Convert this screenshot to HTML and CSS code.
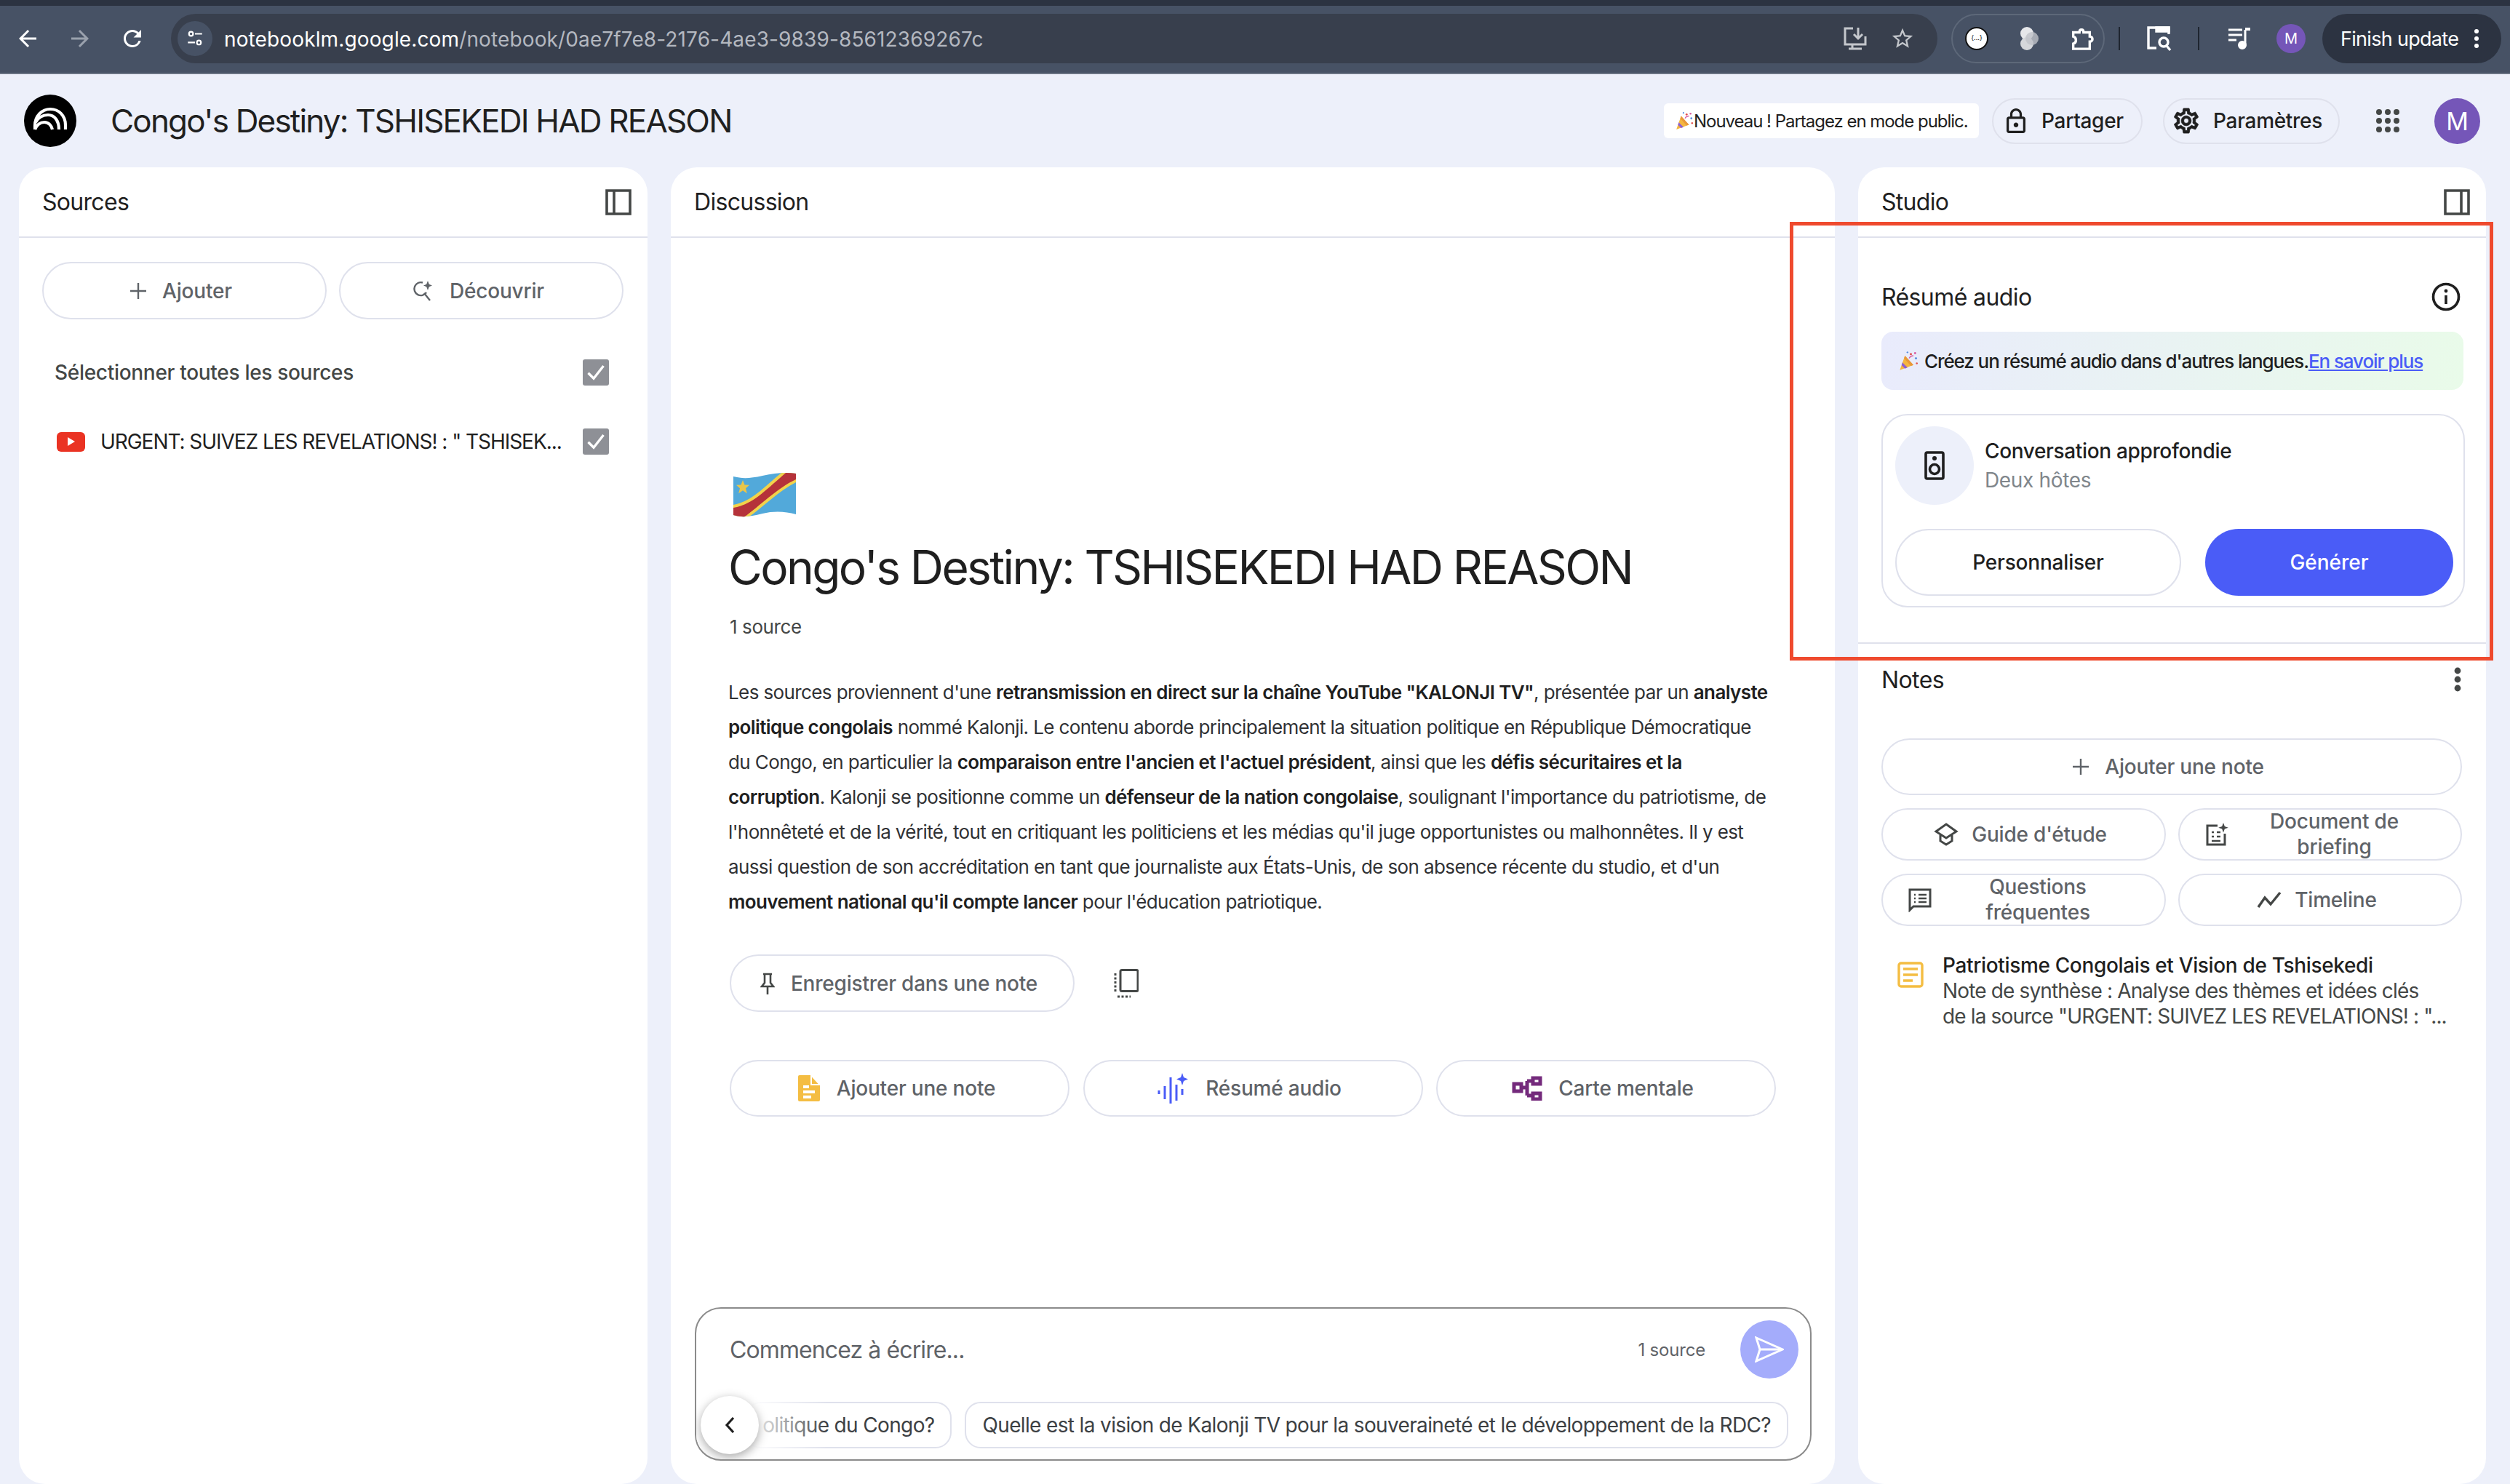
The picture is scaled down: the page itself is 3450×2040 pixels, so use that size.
FILE: index.html
```html
<!doctype html>
<html lang="fr">
<head>
	<meta charset="UTF-8">
	<title>Congo's Destiny: TSHISEKEDI HAD REASON - NotebookLM</title>
	<link rel="stylesheet" href="styles.css">
</head>
<body>
	<div class="tabstrip"></div>

	<!-- barre du navigateur -->
	<div class="toolbar">
		<svg class="nav" viewBox="4 4 16 16"><path d="M20 11H7.83l5.59-5.59L12 4l-8 8 8 8 1.41-1.41L7.83 13H20v-2z" fill="#fff"/></svg>
		<svg class="nav" viewBox="4 4 16 16"><path d="M12 4l-1.41 1.41L16.17 11H4v2h12.17l-5.58 5.59L12 20l8-8z" fill="#9aa1ad"/></svg>
		<svg class="nav" viewBox="4 4 16 16"><path d="M17.65 6.35A7.958 7.958 0 0 0 12 4c-4.42 0-7.99 3.58-7.99 8s3.57 8 7.99 8c3.73 0 6.84-2.55 7.73-6h-2.08A5.99 5.99 0 0 1 12 18c-3.31 0-6-2.69-6-6s2.69-6 6-6c1.66 0 3.14.69 4.22 1.78L13 11h7V4l-2.35 2.35z" fill="#fff"/></svg>
		<div class="omnibox">
			<span class="tune">
				<svg viewBox="0 0 24 24" width="26" height="26" fill="none" stroke="#fff" stroke-width="2"><circle cx="7" cy="6" r="2.6"/><path d="M12 6h9M3 17h9"/><circle cx="17" cy="17" r="2.6"/></svg>
			</span>
			<span class="url">notebooklm.google.com<span class="url-path">/notebook/0ae7f7e8-2176-4ae3-9839-85612369267c</span></span>
			<svg class="omni-icon" viewBox="0 0 34 34" fill="none" stroke="#c4c7cc" stroke-width="3"><path d="M14 3H3v22h28V14"/><path d="M13 25v5M8 31h18" /><path d="M21 2v14M15 11l6 6 6-6"/></svg>
			<svg class="omni-icon star" viewBox="0 0 24 24"><path d="M22 9.24l-7.19-.62L12 2 9.19 8.63 2 9.24l5.46 4.73L5.82 21 12 17.27 18.18 21l-1.63-7.03L22 9.24zM12 15.4l-3.76 2.27 1-4.28-3.32-2.88 4.38-.38L12 6.1l1.71 4.04 4.38.38-3.32 2.88 1 4.28L12 15.4z" fill="#c4c7cc"/></svg>
		</div>
		<div class="ext-group">
			<span class="ext-dot">{...}</span>
			<svg class="ext-blob" viewBox="0 0 28 32"><circle cx="11" cy="9" r="9" fill="#e6e7ea"/><circle cx="11" cy="23" r="9" fill="#d5d7db"/><circle cx="18" cy="16" r="9" fill="#bfc2c8" opacity=".8"/></svg>
			<svg class="ext-puzzle" viewBox="0 0 24 24" fill="none" stroke="#fff" stroke-width="2.4"><path d="M4 6H10C10 2.500 14 2.500 14 6H20V10C23.500 10 23.500 15 20 15V22H4V17C7.500 16 7.500 11 4 10Z"/></svg>
		</div>
		<span class="sep sep-a"></span>
		<svg class="tool-icon" viewBox="0 0 36 36" fill="none" stroke="#fff" stroke-width="3.4"><path d="M14 31H3V3h28v9"/><path d="M14 3h17v5H14z" fill="#fff"/><circle cx="24" cy="23" r="6"/><path d="M28 28l5 6"/></svg>
		<span class="sep sep-b"></span>
		<svg class="tool-icon queue" viewBox="0 0 32 32" fill="none" stroke="#fff" stroke-width="3"><path d="M1 4h19M1 11h19M1 18h11"/><path d="M24 4v20"/><path d="M24 3h7" stroke-width="4"/><circle cx="20" cy="25" r="4.500" fill="#fff"/></svg>
		<span class="avatar-small">M</span>
		<div class="update">
			<span>Finish update</span>
			<svg class="kebab" viewBox="0 0 6 28" fill="#fff"><circle cx="3" cy="4" r="3"/><circle cx="3" cy="14" r="3"/><circle cx="3" cy="24" r="3"/></svg>
		</div>
	</div>

	<!-- en-tete de l'application -->
	<header class="head">
		<svg class="logo" viewBox="0 0 72 72"><circle cx="36" cy="36" r="36" fill="#000"/><g fill="none" stroke="#fff" stroke-width="4.200"><path d="M15 48V43C15 29 25 20 36 20C48 20 57 29 57 42V48"/><path d="M16 38C20 31 27 28 33 28C42 28 48 36 48 48"/><path d="M15 48C18 41 23 38 28 38C34 38 38 43 39 48"/></g></svg>
		<h1 class="app-title">Congo's Destiny: TSHISEKEDI HAD REASON</h1>
		<div class="toast"><svg class="party" viewBox="0 0 24 24"><use href="#popper"/></svg>Nouveau ! Partagez en mode public.</div>
		<button class="head-btn share">
			<svg viewBox="4 1 16 21" width="26" height="36"><path d="M18 8h-1V6c0-2.760-2.240-5-5-5S7 3.240 7 6v2H6c-1.100 0-2 .9-2 2v10c0 1.100.9 2 2 2h12c1.100 0 2-.9 2-2V10c0-1.100-.9-2-2-2zM9 6c0-1.660 1.340-3 3-3s3 1.340 3 3v2H9V6zm9 14H6V10h12v10zm-6-3c1.100 0 2-.9 2-2s-.9-2-2-2-2 .9-2 2 .9 2 2 2z" fill="#1f1f1f"/></svg>
			Partager
		</button>
		<button class="head-btn params">
			<svg viewBox="2 2 20 20" width="34" height="36"><path d="M19.430 12.980c.04-.32.07-.64.07-.98 0-.34-.03-.66-.07-.98l2.110-1.650c.19-.15.24-.42.12-.64l-2-3.460a.5.5 0 0 0-.61-.22l-2.490 1c-.52-.4-1.080-.73-1.690-.98l-.38-2.650A.488.488 0 0 0 14 2h-4c-.25 0-.46.18-.49.42l-.38 2.650c-.61.25-1.170.59-1.690.98l-2.490-1a.566.566 0 0 0-.18-.03c-.17 0-.34.09-.43.25l-2 3.460c-.13.22-.07.49.12.64l2.110 1.650c-.04.32-.07.65-.07.98 0 .33.03.66.07.98l-2.110 1.650c-.19.15-.24.42-.12.64l2 3.460a.5.5 0 0 0 .61.22l2.490-1c.52.4 1.080.73 1.690.98l.38 2.650c.03.24.24.42.49.42h4c.25 0 .46-.18.49-.42l.38-2.650c.61-.25 1.170-.59 1.690-.98l2.490 1c.06.02.12.03.18.03.17 0 .34-.09.43-.25l2-3.460c.12-.22.07-.49-.12-.64l-2.110-1.650zm-1.980-1.710c.04.31.05.52.05.73 0 .21-.02.43-.05.73l-.14 1.130.89.7 1.080.84-.7 1.210-1.270-.51-1.040-.42-.9.68c-.43.32-.84.56-1.250.73l-1.060.43-.16 1.130-.2 1.350h-1.400l-.19-1.350-.16-1.130-1.060-.43c-.43-.18-.83-.41-1.230-.71l-.91-.7-1.060.43-1.270.51-.7-1.210 1.080-.84.89-.7-.14-1.130c-.03-.31-.05-.54-.05-.74s.02-.43.05-.73l.14-1.130-.89-.7-1.080-.84.7-1.210 1.270.51 1.040.42.9-.68c.43-.32.84-.56 1.250-.73l1.060-.43.16-1.130.2-1.350h1.390l.19 1.350.16 1.130 1.060.43c.43.18.83.41 1.230.71l.91.7 1.060-.43 1.270-.51.7 1.210-1.070.85-.89.7.14 1.130zM12 8c-2.210 0-4 1.790-4 4s1.790 4 4 4 4-1.790 4-4-1.790-4-4-4zm0 6c-1.100 0-2-.9-2-2s.9-2 2-2 2 .9 2 2-.9 2-2 2z" fill="#1f1f1f" stroke="#1f1f1f" stroke-width=".5"/></svg>
			Paramètres
		</button>
		<div class="apps">
			<i></i><i></i><i></i><i></i><i></i><i></i><i></i><i></i><i></i>
		</div>
		<span class="avatar">M</span>
	</header>

	<svg class="sprite" width="0" height="0">
		<symbol id="popper" viewBox="0 0 24 24">
			<path d="M2 23L8 6l10 11z" fill="#f4b63f"/>
			<path d="M5 14l6 6-3 1.200-4-4z" fill="#8e5fd0"/>
			<path d="M8 6l10 11-3 1L7 9z" fill="#e8973a"/>
			<circle cx="15" cy="4" r="1.300" fill="#e2504c"/><circle cx="21" cy="9" r="1.300" fill="#5a8fe0"/><circle cx="11" cy="2" r="1" fill="#5a8fe0"/><circle cx="20" cy="3" r="1.200" fill="#d85aa0"/><circle cx="22" cy="15" r="1.100" fill="#e2504c"/>
			<path d="M13 9c1-2 3-3 5-3" stroke="#d85aa0" stroke-width="1.300" fill="none"/>
		</symbol>
		<symbol id="panel-left" viewBox="0 0 36 36">
			<path d="M2 2h32v32H2zM12 2v32" fill="none" stroke="#444746" stroke-width="3.600"/>
		</symbol>
		<symbol id="panel-right" viewBox="0 0 36 36">
			<path d="M2 2h32v32H2zM24 2v32" fill="none" stroke="#444746" stroke-width="3.600"/>
		</symbol>
	</svg>

	<main class="columns">
		<!-- Sources -->
		<section class="panel">
			<div class="panel-head">
				<span>Sources</span>
				<svg class="panel-toggle"><use href="#panel-left"/></svg>
			</div>
			<div class="sources-body">
				<div class="two-btns">
					<button class="pill"><svg class="plus" viewBox="0 0 22 22"><path d="M11 0v22M0 11h22" stroke="#5f6368" stroke-width="2.400"/></svg>Ajouter</button>
					<button class="pill"><svg class="disc" viewBox="0 0 30 30" fill="none" stroke="#5f6368" stroke-width="2.400"><path d="M15 3.500A9 9 0 1 0 20 17"/><path d="M17 18l8 10"/><path d="M22 1l1.800 4.700L28 7.500l-4.200 1.800L22 14l-1.800-4.700L16 7.500l4.200-1.800z" fill="#5f6368" stroke="none"/></svg>Découvrir</button>
				</div>
				<div class="select-row">
					<span class="select-all">Sélectionner toutes les sources</span>
					<span class="check"><svg viewBox="0 0 24 24"><path d="M5 12.500l5 5L19 6" fill="none" stroke="#fff" stroke-width="2.200"/></svg></span>
				</div>
				<div class="source-row">
					<span class="yt"><svg viewBox="0 0 10 12" width="10" height="12"><path d="M0 0l10 6-10 6z" fill="#fff"/></svg></span>
					<span class="source-name">URGENT: SUIVEZ LES REVELATIONS! : " TSHISEK...</span>
					<span class="check"><svg viewBox="0 0 24 24"><path d="M5 12.500l5 5L19 6" fill="none" stroke="#fff" stroke-width="2.200"/></svg></span>
				</div>
			</div>
		</section>

		<!-- Discussion -->
		<section class="panel">
			<div class="panel-head"><span>Discussion</span></div>
			<div class="chat">
				<svg class="flag" viewBox="0 0 86 62">
					<defs><clipPath id="flagclip"><path d="M0 5C12 8 22 8 40 4 58 0 72-1 86 1V57C72 53 56 52 40 56 24 60 12 62 0 58Z"/></clipPath></defs>
					<g clip-path="url(#flagclip)">
						<rect width="86" height="62" fill="#52a9da"/>
						<path d="M0 44C24 40 42 20 66 0L86 0V13C60 26 36 52 16 64L0 64Z" fill="#f2d24a"/>
						<path d="M0 48C26 44 44 24 72 0L86 0V9C58 22 32 50 10 64L0 64Z" fill="#b5323a"/>
					</g>
					<path d="M13 10l2.500 6.500 6.500.3-5 4.500 1.800 7-5.800-4-5.800 4 1.800-7-5-4.500 6.500-.3z" fill="#e9c649"/>
				</svg>
				<h2 class="chat-title">Congo's Destiny: TSHISEKEDI HAD REASON</h2>
				<div class="chat-count">1 source</div>
				<p class="summary">Les sources proviennent d'une <b>retransmission en direct sur la chaîne YouTube "KALONJI TV"</b>, présentée par un <b>analyste</b><br>
				<b>politique congolais</b> nommé Kalonji. Le contenu aborde principalement la situation politique en République Démocratique<br>
				du Congo, en particulier la <b>comparaison entre l'ancien et l'actuel président</b>, ainsi que les <b>défis sécuritaires et la</b><br>
				<b>corruption</b>. Kalonji se positionne comme un <b>défenseur de la nation congolaise</b>, soulignant l'importance du patriotisme, de<br>
				l'honnêteté et de la vérité, tout en critiquant les politiciens et les médias qu'il juge opportunistes ou malhonnêtes. Il y est<br>
				aussi question de son accréditation en tant que journaliste aux États-Unis, de son absence récente du studio, et d'un<br>
				<b>mouvement national qu'il compte lancer</b> pour l'éducation patriotique.</p>
				<div class="save-row">
					<button class="pill save"><svg class="pin" viewBox="0 0 20 30"><path d="M4 2h12M6 2v12l-4 5h16l-4-5V2M10 19v11" fill="none" stroke="#444746" stroke-width="2.600"/></svg>Enregistrer dans une note</button>
					<svg class="copy" viewBox="0 0 34 40" fill="none" stroke="#444746"><rect x="9" y="1.500" width="24" height="29" rx="2" stroke-width="3"/><path d="M2 6v26M5 38h18" stroke-width="3" stroke-dasharray="3 2.500"/></svg>
				</div>
				<div class="three-btns">
					<button class="pill"><svg class="ic-note" viewBox="0 0 32 38"><path d="M3 1h16l12 13v21a2 2 0 0 1-2 2H3a2 2 0 0 1-2-2V3a2 2 0 0 1 2-2z" fill="#f4bd42"/><path d="M8 15h8v4H8zM8 22h16v4H8zM8 29h11v4H8zM19 1v12h12" fill="#fff"/><path d="M19 1l12 13H19z" fill="#f4bd42" stroke="#fff" stroke-width="2"/></svg>Ajouter une note</button>
					<button class="pill"><svg class="ic-audio" viewBox="0 0 44 42" fill="none" stroke="#4a5cf7" stroke-width="3"><path d="M2 24v5M10 18v18M18 6v36M26 16v22M34 22v8"/><path d="M34 0l2 6 6 2.500-6 2.500-2 6-2-6-6-2.500 6-2.500z" fill="#4a5cf7" stroke="none"/></svg>Résumé audio</button>
					<button class="pill"><svg class="ic-map" viewBox="0 0 42 34" fill="none" stroke="#742a7c" stroke-width="5"><rect x="3" y="11" width="10" height="10"/><rect x="29" y="3" width="10" height="8"/><rect x="29" y="24" width="10" height="8"/><path d="M13 16h8M21 7v20M21 7h8M21 27h8"/></svg>Carte mentale</button>
				</div>

				<div class="composer">
					<div class="composer-top">
						<span class="placeholder">Commencez à écrire...</span>
						<span class="composer-count">1 source</span>
						<span class="send"><svg viewBox="0 0 40 36" width="40" height="36" fill="none" stroke="#fff" stroke-width="3"><path d="M2 2l36 16L2 34l5-16z"/><path d="M7 18h31"/></svg></span>
					</div>
					<div class="chips">
						<span class="chip">olitique du Congo?</span>
						<span class="chip">Quelle est la vision de Kalonji TV pour la souveraineté et le développement de la RDC?</span>
					</div>
					<span class="chip-back"><svg viewBox="0 0 14 24" width="14" height="24"><path d="M12 2L3 12l9 10" fill="none" stroke="#1f1f1f" stroke-width="3.200"/></svg></span>
				</div>
			</div>
		</section>

		<!-- Studio -->
		<section class="panel">
			<div class="panel-head">
				<span>Studio</span>
				<svg class="panel-toggle"><use href="#panel-right"/></svg>
			</div>
			<div class="audio-section">
				<div class="section-title">
					<span>Résumé audio</span>
					<svg class="info" viewBox="0 0 40 40" fill="none" stroke="#1f1f1f"><circle cx="20" cy="20" r="17.500" stroke-width="3.600"/><path d="M20 18v12" stroke-width="3.600"/><circle cx="20" cy="12" r="2.400" fill="#1f1f1f" stroke="none"/></svg>
				</div>
				<div class="banner">
					<svg class="banner-party" viewBox="0 0 24 24"><use href="#popper"/></svg>
					<span>Créez un résumé audio dans d'autres langues.<a class="more" href="#">En savoir plus</a></span>
				</div>
				<div class="audio-card">
					<div class="audio-top">
						<span class="speaker-wrap">
							<svg viewBox="0 0 28 40" width="28" height="40" fill="none" stroke="#1f1f1f" stroke-width="3.600"><rect x="2" y="2" width="24" height="36" rx="2"/><circle cx="14" cy="25" r="6.500"/><circle cx="14" cy="10" r="3" fill="#1f1f1f" stroke="none"/></svg>
						</span>
						<div>
							<div class="audio-name">Conversation approfondie</div>
							<div class="audio-sub">Deux hôtes</div>
						</div>
					</div>
					<div class="audio-btns">
						<button class="btn-outline">Personnaliser</button>
						<button class="btn-blue">Générer</button>
					</div>
				</div>
			</div>
			<div class="notes">
				<div class="section-title">
					<span>Notes</span>
					<svg class="notes-menu" viewBox="0 0 10 34" fill="#444746"><circle cx="5" cy="5" r="4.400"/><circle cx="5" cy="17" r="4.400"/><circle cx="5" cy="29" r="4.400"/></svg>
				</div>
				<button class="pill add-note"><svg class="plus" viewBox="0 0 22 22"><path d="M11 0v22M0 11h22" stroke="#5f6368" stroke-width="2.400"/></svg>Ajouter une note</button>
				<div class="note-grid">
					<button class="pill small"><svg class="ic-small" viewBox="0 0 34 34" fill="none" stroke="#444746" stroke-width="3"><path d="M17 3l14 10-14 9L3 13zM9 18v8l8 5 8-5v-8"/></svg>Guide d'étude</button>
					<button class="pill small two-line"><svg class="ic-small" viewBox="0 0 34 34" fill="none" stroke="#444746" stroke-width="3"><path d="M18 5H4v26h24V16"/><path d="M10 14h3M17 14h5M10 20h3M17 20h5M10 26h12" stroke-width="2.600"/><path d="M26 1l1.800 5 5 1.800-5 1.800-1.800 5-1.800-5-5-1.800 5-1.800z" fill="#444746" stroke="none"/></svg><span class="two-text">Document de<br>briefing</span></button>
					<button class="pill small two-line"><svg class="ic-small" viewBox="0 0 34 34" fill="none" stroke="#444746" stroke-width="3"><path d="M3 3h28v23H8l-5 5z"/><path d="M9 10h2M15 10h11M9 15h2M15 15h11M9 20h2M15 20h11" stroke-width="2.600"/></svg><span class="two-text">Questions<br>fréquentes</span></button>
					<button class="pill small"><svg class="ic-small" viewBox="0 0 34 26" fill="none" stroke="#444746" stroke-width="3.400"><path d="M2 23l9-13 8 9L32 3"/></svg>Timeline</button>
				</div>
				<div class="note-item">
					<svg class="note-icon" viewBox="0 0 36 36" fill="none" stroke="#f4bd42" stroke-width="3.400"><rect x="2" y="2" width="32" height="32" rx="3"/><path d="M8 10h20M8 18h20M8 26h13" stroke-width="3.600"/></svg>
					<div>
						<div class="note-title">Patriotisme Congolais et Vision de Tshisekedi</div>
						<div class="note-text">Note de synthèse : Analyse des thèmes et idées clés<br>de la source "URGENT: SUIVEZ LES REVELATIONS! : "...</div>
					</div>
				</div>
			</div>
		</section>
	</main>

	<!-- cadre rouge pose sur la capture -->
	<div class="callout"></div>
</body>
</html>
```

FILE: styles.css
```css
*{
	box-sizing: border-box;
	padding: 0;
	margin: 0;
}
html, body{
	width: 3450px;
	height: 2040px;
	overflow: hidden;
}
body{
	background: #edf0fa;
	font-family: "Inter", "Noto Sans", sans-serif;
	color: #1f1f1f;
	position: relative;
}
button{
	font-family: inherit;
	background: #fff;
	cursor: pointer;
}
.sprite{
	position: absolute;
}

/* navigateur */
.tabstrip{
	height: 8px;
	background: #2c3341;
}
.toolbar{
	height: 94px;
	background: #475265;
	border-bottom: 2px solid #6a7383;
	display: flex;
	align-items: center;
	padding: 0 0 2px 26px;
	color: #fff;
}
.nav{
	width: 24px;
	height: 24px;
	margin-right: 48px;
	flex: none;
}
.omnibox{
	margin-left: -7px;
	width: 2428px;
	height: 68px;
	border-radius: 34px;
	background: #383f4d;
	display: flex;
	align-items: center;
	padding-left: 9px;
}
.tune{
	width: 48px;
	height: 48px;
	border-radius: 50%;
	background: #475265;
	display: flex;
	align-items: center;
	justify-content: center;
}
.url{
	font-size: 28px;
	letter-spacing: .13px;
	margin-left: 16px;
	padding-top: 2px;
	color: #fff;
	flex: 1;
	white-space: nowrap;
}
.url-path{
	color: #b4b8c0;
}
.omni-icon{
	width: 34px;
	height: 34px;
	margin-right: 31px;
}
.ext-group{
	margin-left: 19px;
	width: 211px;
	height: 68px;
	border: 2px solid #5d6879;
	border-radius: 34px;
	display: flex;
	align-items: center;
	padding-left: 17px;
}
.ext-dot{
	width: 32px;
	height: 32px;
	border-radius: 50%;
	background: #fff;
	border: 2px solid #111;
	color: #111;
	font-size: 9px;
	line-height: 26px;
	text-align: center;
}
.ext-blob{
	width: 28px;
	height: 32px;
	margin-left: 42px;
}
.ext-puzzle{
	width: 34px;
	height: 38px;
	margin-left: 41px;
}
.sep{
	width: 2px;
	height: 32px;
	background: #1f2530;
	flex: none;
}
.sep-a{
	margin-left: 19px;
}
.tool-icon{
	width: 36px;
	height: 36px;
	margin-left: 36px;
}
.sep-b{
	margin-left: 35px;
}
.tool-icon.queue{
	width: 32px;
	height: 32px;
	margin-left: 39px;
}
.avatar-small{
	width: 40px;
	height: 40px;
	margin-left: 35px;
	border-radius: 50%;
	background: #7556b8;
	font-size: 20px;
	line-height: 40px;
	text-align: center;
}
.update{
	margin-left: 23px;
	width: 246px;
	height: 68px;
	border-radius: 34px;
	background: #2c3341;
	display: flex;
	align-items: center;
	padding-left: 25px;
	font-size: 27px;
	letter-spacing: -.7px;
}
.kebab{
	width: 6px;
	height: 28px;
	margin-left: 22px;
}

/* en-tete */
.head{
	height: 128px;
	display: flex;
	align-items: center;
	padding: 0 41px 0 33px;
}
.logo{
	width: 72px;
	height: 72px;
	flex: none;
}
.app-title{
	margin-left: 47px;
	font-size: 44px;
	font-weight: 400;
	letter-spacing: -1.8px;
	white-space: nowrap;
	flex: 1;
}
.toast{
	width: 433px;
	height: 48px;
	flex: none;
	background: #fff;
	border-radius: 6px;
	display: flex;
	align-items: center;
	padding-left: 15px;
	font-size: 24px;
	letter-spacing: -1.03px;
	white-space: nowrap;
}
.party{
	width: 26px;
	height: 26px;
	flex: none;
}
.head-btn{
	height: 63px;
	flex: none;
	border-radius: 32px;
	border: 2px solid #dfe1ec;
	background: transparent;
	font-size: 28px;
	font-weight: 500;
	letter-spacing: -.3px;
	color: #1f1f1f;
	display: flex;
	align-items: center;
	gap: 22px;
	padding-left: 18px;
}
.share{
	width: 207px;
	margin-left: 18px;
}
.params{
	width: 243px;
	margin-left: 28px;
	padding-left: 13px;
	gap: 20px;
}
.apps{
	width: 32px;
	height: 32px;
	flex: none;
	margin-left: 50px;
	display: grid;
	grid-template-columns: repeat(3, 8px);
	grid-template-rows: repeat(3, 8px);
	gap: 4px;
}
.apps i{
	background: #444746;
	border-radius: 50%;
}
.avatar{
	width: 63px;
	height: 63px;
	flex: none;
	margin-left: 48px;
	border-radius: 50%;
	background: #7556b8;
	color: #fff;
	font-size: 34px;
	line-height: 63px;
	text-align: center;
}

/* colonnes */
.columns{
	height: 1810px;
	display: grid;
	grid-template-columns: 864px 1600px 863px;
	column-gap: 32px;
	padding-left: 26px;
}
.panel{
	background: #fff;
	border-radius: 36px;
	position: relative;
	overflow: hidden;
	display: flex;
	flex-direction: column;
}
.panel-head{
	height: 97px;
	flex: none;
	border-bottom: 2px solid #dfe1ec;
	display: flex;
	align-items: center;
	justify-content: space-between;
	padding: 0 22px 0 32px;
	font-size: 32px;
	letter-spacing: -.7px;
}
.panel-toggle{
	width: 36px;
	height: 36px;
}

/* boutons arrondis */
.pill{
	border: 2px solid #dfe1ec;
	border-radius: 40px;
	color: #5f6368;
	font-size: 28px;
	font-weight: 500;
	letter-spacing: -.2px;
	display: flex;
	align-items: center;
	justify-content: center;
	gap: 22px;
	padding-right: 9px;
}
.plus{
	width: 22px;
	height: 22px;
}
.disc{
	width: 30px;
	height: 30px;
}

/* Sources */
.sources-body{
	padding: 33px 32px 0;
}
.two-btns{
	display: grid;
	grid-template-columns: 391px 391px;
	column-gap: 17px;
}
.two-btns .pill{
	height: 79px;
}
.select-row{
	margin-top: 53px;
	height: 40px;
	display: flex;
	align-items: center;
	justify-content: space-between;
	padding: 0 21px 0 17px;
}
.select-all{
	font-size: 28px;
	font-weight: 500;
	letter-spacing: -.3px;
	color: #444746;
}
.check{
	width: 36px;
	height: 36px;
	flex: none;
	background: #8e9096;
	border-radius: 3px;
	display: flex;
}
.source-row{
	margin-top: 55px;
	height: 40px;
	display: flex;
	align-items: center;
	padding: 0 21px 0 20px;
}
.yt{
	width: 39px;
	height: 27px;
	background: #ea3323;
	border-radius: 6px;
	display: flex;
	align-items: center;
	justify-content: center;
	flex: none;
}
.source-name{
	margin-left: 21px;
	font-size: 28px;
	letter-spacing: -1.05px;
	white-space: nowrap;
	flex: 1;
	min-width: 0;
}

/* Discussion */
.chat{
	flex: 1;
	padding: 0 32px 32px 33px;
	display: flex;
	flex-direction: column;
}
.flag{
	width: 86px;
	height: 62px;
	margin: 323px 0 0 53px;
	flex: none;
}
.chat-title{
	margin: 24px 0 0 46px;
	font-size: 64px;
	line-height: 88px;
	font-weight: 400;
	letter-spacing: -2.6px;
	white-space: nowrap;
}
.chat-count{
	margin: 18px 0 0 48px;
	font-size: 26px;
	letter-spacing: -.4px;
	line-height: 40px;
	color: #444746;
}
.summary{
	margin: 46px 0 0 46px;
	font-size: 26px;
	letter-spacing: -.61px;
	line-height: 48px;
	color: #303134;
	white-space: nowrap;
}
.summary b{
	font-weight: 600;
	color: #1f1f1f;
}
.save-row{
	margin: 48px 0 0 48px;
	display: flex;
	align-items: center;
}
.save{
	width: 474px;
	height: 79px;
}
.pin{
	width: 20px;
	height: 30px;
}
.copy{
	width: 34px;
	height: 40px;
	margin-left: 54px;
}
.three-btns{
	margin: 66px 0 0 48px;
	display: grid;
	grid-template-columns: 467px 467px 467px;
	column-gap: 18.500px;
}
.three-btns .pill{
	height: 78px;
}
.ic-note{
	width: 32px;
	height: 38px;
}
.ic-audio{
	width: 44px;
	height: 42px;
}
.ic-map{
	width: 42px;
	height: 34px;
}
.composer{
	margin-top: auto;
	height: 211px;
	border: 2px solid #8b8b8b;
	border-radius: 36px;
	position: relative;
	overflow: hidden;
}
.composer-top{
	height: 112px;
	display: flex;
	align-items: center;
	padding: 0 16px 0 46px;
}
.placeholder{
	flex: 1;
	font-size: 32px;
	letter-spacing: -.9px;
	color: #5f6368;
}
.composer-count{
	font-size: 24px;
	letter-spacing: -.2px;
	color: #5f6368;
	margin-right: 48px;
}
.send{
	width: 80px;
	height: 80px;
	border-radius: 50%;
	background: #a4acfb;
	display: flex;
	align-items: center;
	justify-content: center;
}
.chips{
	margin-top: 16px;
	display: flex;
	justify-content: flex-end;
	gap: 18px;
	padding-right: 30px;
	position: relative;
}
.chips::before{
	content: "";
	position: absolute;
	left: 0;
	top: 0;
	width: 180px;
	height: 100%;
	background: linear-gradient(to right, #fff 40%, rgba(255,255,255,0));
}
.chip{
	flex: none;
	height: 64px;
	border: 2px solid #dfe1ec;
	border-radius: 22px;
	font-size: 28px;
	letter-spacing: -.64px;
	line-height: 60px;
	padding: 0 22px;
	color: #3c4043;
	white-space: nowrap;
}
.chip-back{
	position: absolute;
	left: 6px;
	top: 120px;
	width: 80px;
	height: 80px;
	border-radius: 50%;
	background: #fff;
	box-shadow: 0 4px 14px rgba(0,0,0,.35);
	display: flex;
	align-items: center;
	justify-content: center;
}

/* Studio */
.audio-section{
	height: 558px;
	flex: none;
	border-bottom: 2px solid #dfe1ec;
	padding: 58px 29px 0 32px;
}
.section-title{
	height: 46px;
	display: flex;
	align-items: center;
	justify-content: space-between;
	font-size: 32px;
	letter-spacing: -.6px;
}
.info{
	width: 40px;
	height: 40px;
	margin-right: 6px;
}
.banner{
	margin-top: 25px;
	width: 800px;
	height: 80px;
	border-radius: 16px;
	background: linear-gradient(100deg, #e9ebfc, #e9fbe9);
	display: flex;
	align-items: center;
	padding-left: 23px;
	font-size: 26px;
	font-weight: 500;
	letter-spacing: -1.1px;
	white-space: nowrap;
}
.banner-party{
	width: 28px;
	height: 28px;
	margin-right: 8px;
	flex: none;
}
.more{
	color: #4a5cf7;
}
.audio-card{
	margin-top: 33px;
	width: 802px;
	height: 266px;
	border: 2px solid #dfe1ec;
	border-radius: 36px;
	padding: 15px 17px 0;
}
.audio-top{
	display: flex;
	align-items: center;
	gap: 15px;
}
.speaker-wrap{
	width: 108px;
	height: 108px;
	border-radius: 50%;
	background: #edf0fa;
	display: flex;
	align-items: center;
	justify-content: center;
}
.audio-name{
	font-size: 28px;
	font-weight: 500;
	letter-spacing: -.35px;
	line-height: 40px;
}
.audio-sub{
	font-size: 28px;
	letter-spacing: -.35px;
	line-height: 40px;
	color: #80868b;
}
.audio-btns{
	margin-top: 33px;
	display: grid;
	grid-template-columns: 393px 341px;
	column-gap: 33px;
}
.btn-outline, .btn-blue{
	height: 92px;
	border-radius: 46px;
	font-size: 28px;
	font-weight: 500;
}
.btn-outline{
	border: 2px solid #dfe1ec;
	color: #1f1f1f;
	letter-spacing: -.2px;
}
.btn-blue{
	border: none;
	background: #4a5cf7;
	color: #fff;
}
.notes{
	padding: 26px 32px 0;
}
.notes-menu{
	width: 10px;
	height: 34px;
	margin-right: 2px;
}
.add-note{
	margin-top: 58px;
	width: 798px;
	height: 78px;
}
.note-grid{
	margin-top: 18px;
	display: grid;
	grid-template-columns: 391px 390px;
	grid-auto-rows: 72px;
	gap: 18px 17px;
	width: 798px;
}
.small{
	line-height: 35px;
	gap: 18px;
}
.two-line{
	justify-content: flex-start;
	padding: 0 0 0 34px;
}
.two-text{
	flex: 1;
	text-align: center;
	padding-right: 47px;
}
.ic-small{
	width: 34px;
	height: 34px;
	flex: none;
}
.note-item{
	margin-top: 37px;
	display: flex;
	padding-left: 22px;
	gap: 26px;
}
.note-icon{
	width: 36px;
	height: 36px;
	margin-top: 12px;
	flex: none;
}
.note-title{
	font-size: 28px;
	font-weight: 500;
	letter-spacing: -.35px;
	line-height: 35px;
}
.note-text{
	font-size: 28px;
	letter-spacing: -.85px;
	line-height: 35px;
	color: #444746;
	white-space: nowrap;
}

/* annotation */
.callout{
	position: absolute;
	left: 2460px;
	top: 305px;
	width: 967px;
	height: 603px;
	border: 5px solid #ef4a2e;
}
```
